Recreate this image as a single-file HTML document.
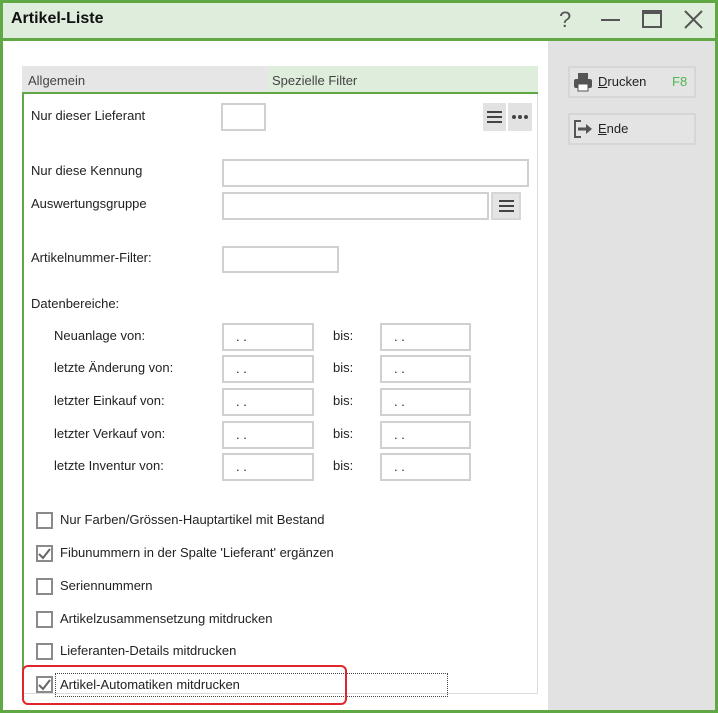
<!DOCTYPE html>
<html><head><meta charset="utf-8"><style>
*{margin:0;padding:0;box-sizing:border-box}
body{width:718px;height:713px;position:relative;overflow:hidden;background:#fff;font-family:"Liberation Sans",sans-serif;font-size:13px;color:#222}
.a{position:absolute}
.in{position:absolute;border:2px solid #d0d0d0;background:#fff}
.t{position:absolute;white-space:nowrap;line-height:16px}
.cb{position:absolute;left:36px;width:17px;height:17px;border:2px solid #8a8a8a;background:#fff}
.btn{position:absolute;background:#e4e4e4;border:2px solid #d6d6d6}
</style></head><body>
<div class="a" style="left:0;top:0;width:718px;height:713px;border:3px solid #5fa843"></div>
<div class="a" style="left:3px;top:3px;width:712px;height:36px;background:#dfeedc"></div>
<div class="a" style="left:3px;top:38px;width:712px;height:3px;background:#5fa843"></div>
<div class="t" style="left:11px;top:11px;font-size:16px;font-weight:bold;color:#111">Artikel-Liste</div>
<div class="t" style="left:559px;top:8px;font-size:22px;color:#555;line-height:24px">?</div>
<div class="a" style="left:601px;top:19px;width:19px;height:2px;background:#555"></div>
<div class="a" style="left:642px;top:10px;width:20px;height:18px;border:2px solid #555;border-top-width:4px"></div>
<svg class="a" style="left:684px;top:10px" width="19" height="19"><path d="M1 1L18 18M18 1L1 18" stroke="#555" stroke-width="2"/></svg>
<div class="a" style="left:548px;top:41px;width:167px;height:669px;background:#e2e2e2"></div>
<div class="btn" style="left:568px;top:66px;width:128px;height:32px"></div>
<svg class="a" style="left:572px;top:71px" width="22" height="22"><rect x="6" y="2" width="10" height="6" fill="#555"/><rect x="2" y="8" width="18" height="9" rx="2" fill="#555"/><rect x="6" y="13" width="10" height="7" fill="#fff" stroke="#555"/></svg>
<div class="t" style="left:598px;top:74px"><u>D</u>rucken</div>
<div class="t" style="left:672px;top:74px;color:#4cb84c">F8</div>
<div class="btn" style="left:568px;top:113px;width:128px;height:32px"></div>
<svg class="a" style="left:572px;top:118px" width="22" height="22"><path d="M9 3H3V19H9" fill="none" stroke="#555" stroke-width="2"/><path d="M6 11H15" stroke="#555" stroke-width="3"/><path d="M14 6L20 11L14 16Z" fill="#555"/></svg>
<div class="t" style="left:598px;top:121px"><u>E</u>nde</div>
<div class="a" style="left:22px;top:66px;width:246px;height:26px;background:#e6e6e6"></div>
<div class="a" style="left:268px;top:66px;width:270px;height:26px;background:#dfeedc"></div>
<div class="t" style="left:28px;top:73px;color:#444">Allgemein</div>
<div class="t" style="left:272px;top:73px;color:#444">Spezielle Filter</div>
<div class="a" style="left:22px;top:92px;width:516px;height:2px;background:#5fa843"></div>
<div class="a" style="left:22px;top:92px;width:2px;height:608px;background:#5fa843"></div>
<div class="a" style="left:537px;top:94px;width:1px;height:600px;background:#ddd"></div>
<div class="a" style="left:24px;top:693px;width:514px;height:1px;background:#ddd"></div>
<div class="t" style="left:31px;top:108px">Nur dieser Lieferant</div>
<div class="in" style="left:221px;top:103px;width:45px;height:28px"></div>
<div class="btn" style="left:483px;top:103px;width:23px;height:28px;border:none;background:#e2e2e2"></div>
<div class="btn" style="left:508px;top:103px;width:24px;height:28px;border:none;background:#e2e2e2"></div>
<svg class="a" style="left:486px;top:110px" width="18" height="14"><path d="M1 2H16M1 7H16M1 12H16" stroke="#444" stroke-width="2"/></svg>
<svg class="a" style="left:510px;top:114px" width="20" height="6"><circle cx="4" cy="3" r="2" fill="#444"/><circle cx="10" cy="3" r="2" fill="#444"/><circle cx="16" cy="3" r="2" fill="#444"/></svg>
<div class="t" style="left:31px;top:163px">Nur diese Kennung</div>
<div class="in" style="left:222px;top:159px;width:307px;height:28px"></div>
<div class="t" style="left:31px;top:196px">Auswertungsgruppe</div>
<div class="in" style="left:222px;top:192px;width:267px;height:28px"></div>
<div class="btn" style="left:491px;top:192px;width:30px;height:28px;border:2px solid #d6d6d6"></div>
<svg class="a" style="left:498px;top:199px" width="18" height="14"><path d="M1 2H16M1 7H16M1 12H16" stroke="#444" stroke-width="2"/></svg>
<div class="t" style="left:31px;top:250px">Artikelnummer-Filter:</div>
<div class="in" style="left:222px;top:246px;width:117px;height:27px"></div>
<div class="t" style="left:31px;top:296px">Datenbereiche:</div>
<div class="t" style="left:54px;top:328px">Neuanlage von:</div>
<div class="t" style="left:54px;top:360px">letzte Änderung von:</div>
<div class="t" style="left:54px;top:393px">letzter Einkauf von:</div>
<div class="t" style="left:54px;top:426px">letzter Verkauf von:</div>
<div class="t" style="left:54px;top:458px">letzte Inventur von:</div>
<div class="in" style="left:222px;top:323px;width:92px;height:28px"></div><div class="t" style="left:236px;top:329px">. .</div><div class="t" style="left:333px;top:328px">bis:</div><div class="in" style="left:380px;top:323px;width:91px;height:28px"></div><div class="t" style="left:394px;top:329px">. .</div>
<div class="in" style="left:222px;top:355px;width:92px;height:28px"></div><div class="t" style="left:236px;top:361px">. .</div><div class="t" style="left:333px;top:360px">bis:</div><div class="in" style="left:380px;top:355px;width:91px;height:28px"></div><div class="t" style="left:394px;top:361px">. .</div>
<div class="in" style="left:222px;top:388px;width:92px;height:28px"></div><div class="t" style="left:236px;top:394px">. .</div><div class="t" style="left:333px;top:393px">bis:</div><div class="in" style="left:380px;top:388px;width:91px;height:28px"></div><div class="t" style="left:394px;top:394px">. .</div>
<div class="in" style="left:222px;top:421px;width:92px;height:28px"></div><div class="t" style="left:236px;top:427px">. .</div><div class="t" style="left:333px;top:426px">bis:</div><div class="in" style="left:380px;top:421px;width:91px;height:28px"></div><div class="t" style="left:394px;top:427px">. .</div>
<div class="in" style="left:222px;top:453px;width:92px;height:28px"></div><div class="t" style="left:236px;top:459px">. .</div><div class="t" style="left:333px;top:458px">bis:</div><div class="in" style="left:380px;top:453px;width:91px;height:28px"></div><div class="t" style="left:394px;top:459px">. .</div>
<div class="cb" style="top:512px"></div><div class="t" style="left:60px;top:512px">Nur Farben/Grössen-Hauptartikel mit Bestand</div>
<div class="cb" style="top:545px"></div><svg class="a" style="left:38px;top:547px" width="13" height="13"><path d="M1 7L5 11L12 2" fill="none" stroke="#666" stroke-width="2"/></svg><div class="t" style="left:60px;top:545px">Fibunummern in der Spalte 'Lieferant' ergänzen</div>
<div class="cb" style="top:578px"></div><div class="t" style="left:60px;top:578px">Seriennummern</div>
<div class="cb" style="top:611px"></div><div class="t" style="left:60px;top:611px">Artikelzusammensetzung mitdrucken</div>
<div class="cb" style="top:643px"></div><div class="t" style="left:60px;top:643px">Lieferanten-Details mitdrucken</div>
<div class="cb" style="top:676px"></div><svg class="a" style="left:38px;top:678px" width="13" height="13"><path d="M1 7L5 11L12 2" fill="none" stroke="#666" stroke-width="2"/></svg>
<div class="a" style="left:55px;top:673px;width:393px;height:24px;border:1px dotted #444"></div>
<div class="t" style="left:60px;top:677px">Artikel-Automatiken mitdrucken</div>
<div class="a" style="left:22px;top:665px;width:325px;height:40px;border:2px solid #e0262b;border-radius:6px"></div>
</body></html>
